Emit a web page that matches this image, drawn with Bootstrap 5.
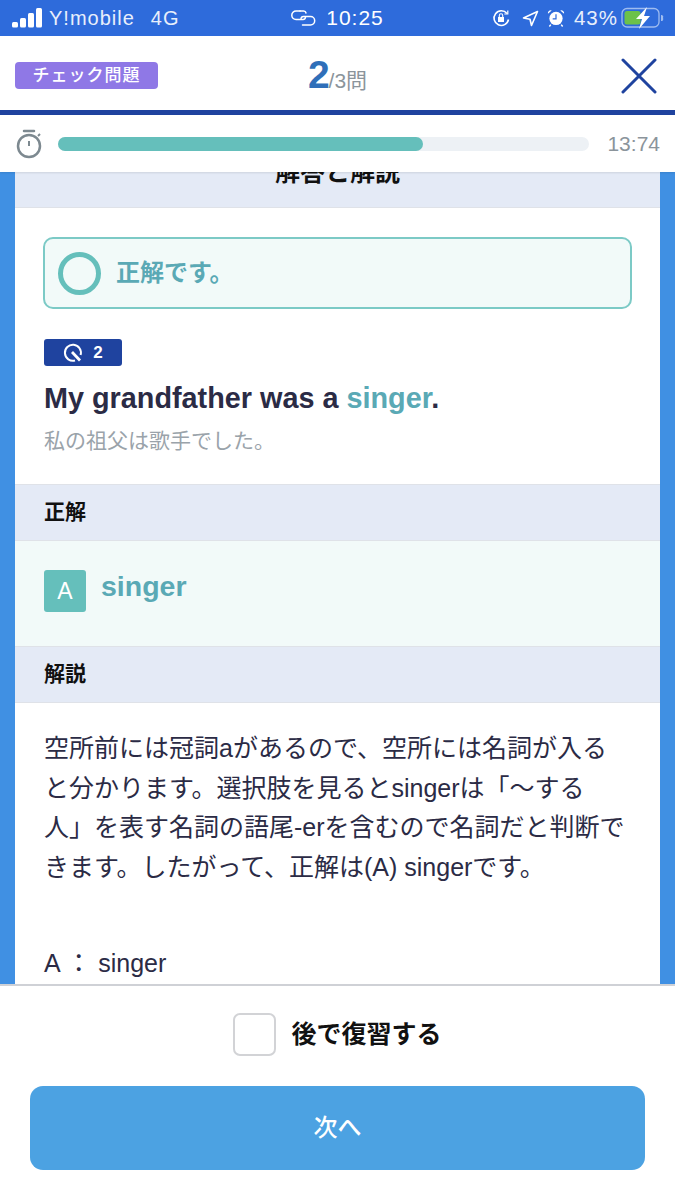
<!DOCTYPE html>
<html lang="ja">
  <head>
    <meta charset="UTF-8" />
    <meta name="viewport" content="width=device-width, initial-scale=1.0" />
    <title>チェック問題</title>
    <link href="https://cdn.jsdelivr.net/npm/bootstrap@5.3.3/dist/css/bootstrap.min.css" rel="stylesheet" />
    <style>
      body { font-family: "Liberation Sans", "Noto Sans CJK JP", sans-serif; height: 1200px; overflow: hidden; color: #2b2b45; }
      .status-bar { height: 36px; background: #2e6bdb; color: #e8effb; font-size: 20px; letter-spacing: 1px; padding: 0 11px; }
      .status-left { width: 250px; }
      .status-clock { font-size: 21px; color: #fff; }
      .status-right { width: 250px; }
      .top-head { height: 74px; padding: 0 15px; }
      .tag-check { width: 143px; height: 27px; margin-top: 5px; background: #8f78e6; color: #fff; border-radius: 4px; font-size: 17px; font-weight: 500; letter-spacing: 1px; }
      .count-box { position: absolute; left: 0; right: 0; top: 53px; text-align: center; color: #8b949b; font-size: 21px; line-height: 44px; pointer-events: none; }
      .count-box b { font-size: 39px; font-weight: 700; color: #2f6fb9; letter-spacing: -1px; }
      .head-line { height: 5px; background: #1f439f; }
      .timer-row { height: 57px; padding: 0 15px; background: #fff; box-shadow: 0 1px 2px rgba(0,0,0,.1); position: relative; z-index: 1; }
      .timer-bar { height: 14px; background: #edf1f5; border-radius: 7px; margin: 0 18px 0 15px; }
      .timer-fill { height: 14px; background: #65bfbb; border-radius: 7px; }
      .timer-text { color: #8b949b; font-size: 21px; }
      .scroll-box { flex: 1 1 0; min-height: 0; overflow: hidden; background: #4090e3; padding: 0 15px; }
      .sheet { background: #fff; margin-top: -26px; padding-bottom: 40px; }
      .band { background: #e4eaf6; border-top: 1px solid #dfe2e8; border-bottom: 1px solid #dfe2e8; height: 57px; padding: 0 29px 2px; font-size: 21px; font-weight: 700; color: #111; line-height: 1; }
      .band-top { height: 62px; border-top: 0; font-size: 25px; justify-content: center; padding-bottom: 8px; }
      .result-wrap { padding: 29px 28px 0 29px; }
      .result-box { height: 72px; margin-left: -1px; border: 2px solid #7ccac6; border-radius: 10px; background: #f2faf9; padding-left: 13px; }
      .ring { width: 43px; height: 43px; border: 5px solid #65bfbb; border-radius: 50%; }
      .result-text { color: #5aa9b5; font-size: 24px; font-weight: 700; margin-left: 15px; }
      .point-tag { width: 78px; height: 27px; margin-top: 30px; background: #1f439f; color: #fff; border-radius: 3px; font-size: 17px; font-weight: 700; }
      .sentence { font-size: 28.800px; font-weight: 700; line-height: 36px; margin-top: 14px; }
      .sentence span { color: #5aa9b5; }
      .sentence-ja { color: #9aa3aa; font-size: 21px; line-height: 30px; margin-top: 10px; margin-bottom: 28px; }
      .answer-row { height: 105px; background: #f2faf9; padding: 29px 29px 0; }
      .answer-key { width: 42px; height: 42px; background: #65bfbb; color: #fff; border-radius: 3px; font-size: 23px; }
      .answer-word { color: #5aa9b5; font-size: 28.500px; font-weight: 700; line-height: 32px; margin-left: 15px; }
      .explain { padding: 26px 29px 0; font-size: 25px; line-height: 39.500px; text-spacing-trim: space-all; }
      .explain p { margin: 0 0 57px; }
      .foot { height: 216px; background: #fff; border-top: 2px solid #cfd1d6; padding: 0 30px; }
      .later-row { height: 100px; padding-bottom: 3px; }
      .later-box { width: 43px; height: 43px; border: 2px solid #d2d3d6; border-radius: 7px; margin-right: 15px; background: #fff; }
      .later-text { font-size: 25px; font-weight: 700; color: #111; }
      .btn-next { height: 84px; width: 100%; background: #4ca2e2; border: 0; border-radius: 13px; color: #fff; font-size: 24px; font-weight: 500; }
    </style>
  </head>
  <body class="d-flex flex-column position-relative">

    <div class="status-bar d-flex align-items-center justify-content-between">
      <div class="status-left d-flex align-items-center">
        <svg width="31" height="20" viewBox="0 0 31 20" fill="#fff"><rect x="1" y="14" width="6" height="5.500" rx="1.500"/><rect x="9" y="10" width="6" height="9.500" rx="1.500"/><rect x="17" y="5" width="6" height="14.500" rx="1.500"/><rect x="25" y="0" width="6" height="19.500" rx="1.500"/></svg>
        <span style="margin-left:7px">Y!mobile</span><span style="margin-left:16px">4G</span>
      </div>
      <div class="status-clock d-flex align-items-center">
        <svg style="margin-right:10px" width="25" height="16" viewBox="0 0 25 16" fill="none" stroke="#fff" stroke-width="1.500" stroke-linecap="round"><path d="M9 1H5a4.200 4.200 0 0 0 0 8.400h7a2.500 2.500 0 0 0 2.500-2.200"/><path d="M10 8.800a2.500 2.500 0 0 1 2.500-2.300h7a4.200 4.200 0 0 1 0 8.400h-8"/><path d="M9 1h3.500A2.500 2.500 0 0 1 15 3"/></svg>
        10:25
      </div>
      <div class="status-right d-flex align-items-center justify-content-end">
        <svg width="19" height="19" viewBox="0 0 19 19" fill="none" stroke="#fff" stroke-width="1.600"><path d="M16.500 10.500a7.300 7.300 0 1 1-1.500-6"/><path d="M15.800 1.500v3.500h-3.500" stroke-width="1.200"/><rect x="6" y="8" width="6" height="5" fill="#fff" stroke="none"/><path d="M7.300 8V6.500a1.700 1.700 0 0 1 3.400 0V8" stroke-width="1.100"/></svg>
        <svg style="margin-left:11px" width="17" height="17" viewBox="0 0 17 17" fill="none" stroke="#fff" stroke-width="1.600" stroke-linejoin="round"><path d="M15.500 1.500 1.500 8l6.500 1.200L9.500 15.500z"/></svg>
        <svg style="margin-left:8px" width="18" height="20" viewBox="0 0 19 20"><circle cx="9.500" cy="10.500" r="7" fill="#fff"/><path d="M9.500 6v5H6" fill="none" stroke="#2e6bdb" stroke-width="1.300"/><path d="M1 5.500a3 3 0 0 1 4-3.500zM18 5.500a3 3 0 0 0-4-3.500z" fill="#fff"/><path d="M4 17l-1.500 2M15 17l1.500 2" stroke="#fff" stroke-width="1.500"/></svg>
        <span style="margin-left:9px;font-size:20.500px">43%</span>
        <svg style="margin-left:3px" width="43" height="24" viewBox="0 0 43 24"><rect x="1" y="2.500" width="37" height="18.500" rx="5" fill="none" stroke="#9ebcf0" stroke-width="1.300"/><rect x="3.500" y="5" width="16" height="13.500" rx="2.500" fill="#6cc24a"/><path d="M40 9v6a2 2 0 0 0 2-3 2 2 0 0 0-2-3z" fill="#9ebcf0"/><path d="M26 1 15 13h6l-3 10 11-13h-6z" fill="#fff"/></svg>
      </div>
    </div>

    <div class="top-head d-flex align-items-center justify-content-between">
      <div class="tag-check d-flex align-items-center justify-content-center">チェック問題</div>
      <button type="button" class="btn p-0 border-0 lh-1" aria-label="閉じる" style="margin:5px 3px 0 0">
        <svg class="d-block" width="36" height="36" viewBox="0 0 36 36" stroke="#1f439f" stroke-width="3" stroke-linecap="round"><path d="M2 2l32 32M34 2 2 34"/></svg>
      </button>
    </div>
    <div class="count-box"><b>2</b>/3問</div>
    <div class="head-line"></div>

    <div class="timer-row d-flex align-items-center">
      <svg width="28" height="30" viewBox="0 0 28 30" fill="none" stroke="#7d8990" stroke-width="2.500"><circle cx="14" cy="17" r="11"/><path d="M9 2h10" stroke-linecap="round"/><path d="M14 12v5" stroke-width="2"/><path d="M23 7l2-2" stroke-width="2"/></svg>
      <div class="timer-bar flex-grow-1"><div class="timer-fill" style="width: 68.700%"></div></div>
      <span class="timer-text">13:74</span>
    </div>

    <main class="scroll-box">
      <div class="sheet">
        <div class="band band-top d-flex align-items-center">解答と解説</div>

        <div class="result-wrap">
          <div class="result-box d-flex align-items-center">
            <div class="ring"></div>
            <div class="result-text">正解です。</div>
          </div>
          <div class="point-tag d-flex align-items-center justify-content-center">
            <svg style="margin-right:10px" width="20" height="20" viewBox="0 0 20 20" fill="none" stroke="#fff" stroke-width="2"><path d="M12 17.500A8 8 0 1 1 17.600 12"/><path d="M9 9l8 8.500" stroke-width="2.800"/></svg>
            2
          </div>
          <div class="sentence">My grandfather was a <span>singer</span>.</div>
          <div class="sentence-ja">私の祖父は歌手でした。</div>
        </div>

        <div class="band d-flex align-items-center">正解</div>
        <div class="answer-row d-flex align-items-start">
          <div class="answer-key d-flex align-items-center justify-content-center">A</div>
          <div class="answer-word">singer</div>
        </div>
        <div class="band d-flex align-items-center">解説</div>

        <div class="explain">
          <p>空所前には冠詞aがあるので、空所には名詞が入ると分かります。選択肢を見るとsingerは「〜する人」を表す名詞の語尾-erを含むので名詞だと判断できます。したがって、正解は(A) singerです。</p>
          <div>A ： singer</div>
        </div>
      </div>
    </main>

    <div class="foot">
      <div class="later-row d-flex align-items-center justify-content-center">
        <span class="later-box"></span>
        <span class="later-text">後で復習する</span>
      </div>
      <button type="button" class="btn btn-next">次へ</button>
    </div>

    <script src="https://cdn.jsdelivr.net/npm/bootstrap@5.3.3/dist/js/bootstrap.bundle.min.js"></script>
  </body>
</html>
